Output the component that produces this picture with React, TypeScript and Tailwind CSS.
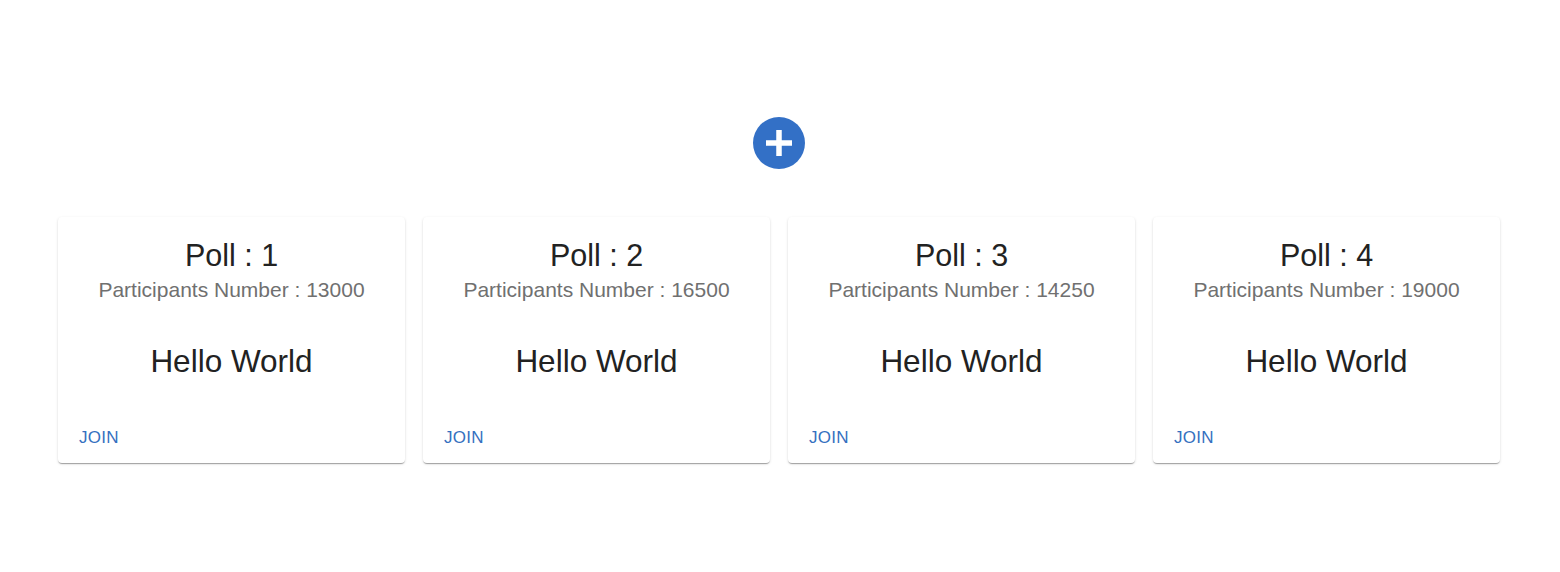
import React from "react";

type Poll = {
  id: number;
  participants: number;
};

const polls: Poll[] = [
  { id: 1, participants: 13000 },
  { id: 2, participants: 16500 },
  { id: 3, participants: 14250 },
  { id: 4, participants: 19000 },
];

const PollCard = ({ poll }: { poll: Poll }) => {
  return (
    <div className="flex h-[246px] flex-col rounded-[4px] bg-white shadow-[0_2px_1px_-1px_rgba(0,0,0,0.2),0_1px_1px_0_rgba(0,0,0,0.14),0_1px_3px_0_rgba(0,0,0,0.12)]">
      <div className="flex flex-1 flex-col items-center pt-[20px]">
        <h2 className="text-[30.5px] leading-[36px] text-[#222]">Poll : {poll.id}</h2>
        <p className="mt-[5px] text-[21px] leading-[24px] text-[#707070]">
          Participants Number : {poll.participants}
        </p>
        <p className="mt-[41px] text-[31.5px] leading-[36px] text-[#222]">Hello World</p>
      </div>
      {/* card actions */}
      <div className="flex px-[8px] pt-[8px] pb-[10px]">
        <button className="h-[30px] rounded-[4px] px-[13px] text-[17px] tracking-[0.3px] text-[#3470c0]">
          JOIN
        </button>
      </div>
    </div>
  );
};

export default function App() {
  return (
    <div className="min-h-[572px] bg-white pl-[58px] pr-[60px] font-['Liberation_Sans',Arial,sans-serif]">
      <div className="flex justify-center pt-[117px]">
        <button
          title="New poll"
          className="flex h-[52px] w-[52px] items-center justify-center rounded-full bg-[#3370c6]"
        >
          <svg width="26" height="26" viewBox="0 0 26 26">
            <path d="M13 0v26M0 13h26" stroke="white" strokeWidth="5.5" />
          </svg>
        </button>
      </div>

      <div className="mt-[48px] grid grid-cols-4 gap-[18px]">
        {polls.map((p) => (
          <PollCard key={p.id} poll={p} />
        ))}
      </div>
    </div>
  );
}
